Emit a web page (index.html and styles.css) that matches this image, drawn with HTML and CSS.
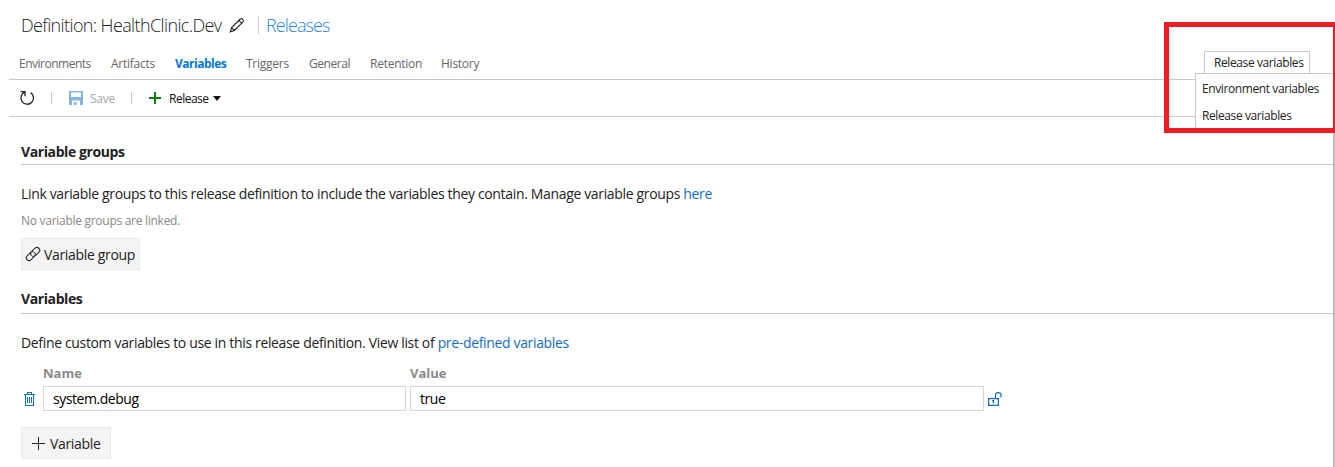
FILE: index.html
```html
<!DOCTYPE html>
<html lang="en">
<head>
<meta charset="utf-8">
<title>Definition: HealthClinic.Dev</title>
<link rel="stylesheet" href="styles.css">
</head>
<body>
<div class="page">
  <header class="title">
    <span class="title-name">Definition: HealthClinic.Dev</span>
    <svg class="pencil" width="16" height="16" viewBox="0 0 16 16" fill="none" stroke="#222" stroke-width="1.1"><path d="M1.2 14.8 2.6 10.6 11.2 2Q12.4.9 13.7 2.2T14 4.8L5.4 13.4ZM9.8 3.4 12.6 6.2M2.6 10.6 5.4 13.4"/></svg>
    <span class="title-rule"></span>
    <a class="title-link">Releases</a>
  </header>
  <nav class="tabs">
    <a class="t-env">Environments</a><a class="t-art">Artifacts</a><a class="t-var active">Variables</a><a class="t-tri">Triggers</a><a class="t-gen">General</a><a class="t-ret">Retention</a><a class="t-his">History</a>
  </nav>
  <div class="toolbar">
    <svg class="refresh" width="16" height="16" viewBox="0 0 16 16" fill="none" stroke="#222" stroke-width="1.3"><path d="M1.5 1.7H6V6.2M5.6 2.2A6.3 6.3 0 1 0 11.6 2.6"/></svg>
    <span class="sep"></span>
    <svg class="disk" width="14" height="14" viewBox="0 0 14 14"><path fill="#87b4df" fill-rule="evenodd" d="M0 0H14V14H11V9.5H3V14H0ZM2 1.5V6H12V1.5ZM5 11H7.5V14H5Z"/></svg>
    <span class="save">Save</span>
    <span class="sep sep-two"></span>
    <svg class="plus" width="12" height="12" viewBox="0 0 12 12"><path stroke="#107c10" stroke-width="2" d="M6 0V12M0 6H12"/></svg>
    <span class="release">Release</span>
    <svg class="caret" width="8" height="5" viewBox="0 0 8 5"><path fill="#111" d="M0 0H8L4 5Z"/></svg>
  </div>
  <main class="content">
    <h2 class="h-groups"><span>Variable groups</span></h2>
    <p class="desc desc-groups"><span>Link variable groups to this release definition to include the variables they contain. Manage variable groups <a>here</a></span></p>
    <p class="note"><span>No variable groups are linked.</span></p>
    <button class="btn btn-group">
      <svg width="16" height="16" viewBox="0 0 16 16" fill="none" stroke="#333" stroke-width="1.15"><path d="M6.6 9.6Q4.6 7.6 6.6 5.6L9.8 2.4Q11.8.4 13.8 2.2T13.9 6.2L10.7 9.4Q9 10.9 7.4 9.9M9.4 6.4Q11.4 8.4 9.4 10.4L6.2 13.6Q4.2 15.6 2.2 13.8T2.1 9.8L5.3 6.6Q7 5.1 8.6 6.1"/></svg>
      <span>Variable group</span>
    </button>
    <h2 class="h-vars"><span>Variables</span></h2>
    <p class="desc desc-vars"><span>Define custom variables to use in this release definition. View list of <a>pre-defined variables</a></span></p>
    <div class="grid">
      <span></span><b class="h-name">Name</b><b class="h-value">Value</b><span></span>
      <svg class="trash" width="11" height="14" viewBox="0 0 11 14" fill="none" stroke="#106ebe" shape-rendering="crispEdges"><path d="M0 2.5H11M3.5 2V.5H7.5V2M1.5 3V13.5H9.5V3M3.5 5V11M5.5 5V11M7.5 5V11"/></svg>
      <div class="field"><span class="f-name">system.debug</span></div>
      <div class="field"><span class="f-value">true</span></div>
      <svg class="lock" width="14" height="14" viewBox="0 0 14 14" fill="none" stroke="#106ebe"><path stroke-width="1.2" d="M.6 6.6H10.4V13.4H.6Z"/><path stroke-width="1.2" d="M7.5 6V2.8Q7.5.6 10.2.6T13 2.8V5.5"/><path stroke-width="1.3" d="M4 8.6H6.2M5.5 8.5V11.5"/></svg>
    </div>
    <button class="btn btn-var">
      <svg width="13" height="13" viewBox="0 0 13 13"><path stroke="#222" d="M6.5 0V13M0 6.5H13"/></svg>
      <span>Variable</span>
    </button>
  </main>
</div>
<div class="scroll-edge"></div>
<div class="picker">
  <div class="picker-current"><span>Release variables</span></div>
  <div class="picker-menu"><span class="m-env">Environment variables</span><span class="m-rel">Release variables</span></div>
</div>
<div class="callout"></div>
</body>
</html>
```
FILE: styles.css
```css
* { box-sizing: border-box; }
body { margin: 0; width: 1335px; height: 467px; overflow: hidden; position: relative; background: #fff; color: #222; font-family: "Open Sans", "Noto Sans", sans-serif; font-size: 13px; }
a { color: #106ebe; }
.page { width: 1333px; padding-left: 9px; white-space: nowrap; }
.title { display: flex; align-items: center; height: 50px; padding-left: 12px; font-size: 18px; font-weight: 300; }
.title-name { width: 208px; letter-spacing: -0.62px; }
.title-rule { width: 1px; height: 18px; margin: 0 7px 0 13px; background: #c8d2e0; }
.title-link { color: #2b88d8; letter-spacing: -0.9px; }
.tabs { display: flex; align-items: center; height: 30px; padding: 0 0 3px 10px; border-bottom: 1px solid #c8c8c8; font-size: 12px; letter-spacing: -0.25px; }
.tabs a { color: #666; }
.tabs .active { color: #0078d7; font-weight: 700; letter-spacing: -0.5px; }
.tabs .t-env { width: 92px; letter-spacing: -0.5px; }
.t-art { width: 64px; }
.t-var { width: 71px; }
.t-tri { width: 63px; }
.t-gen { width: 61px; }
.tabs .t-gen { letter-spacing: -0.45px; }
.t-ret { width: 71px; }
.toolbar { display: flex; align-items: center; height: 37px; padding-left: 10px; border-bottom: 1px solid #c8c8c8; font-size: 12px; }
.sep { width: 1px; height: 12px; margin: 0 17px 0 16px; background: #c8c8c8; }
.save { width: 25px; margin-left: 7px; color: #a6a6a6; letter-spacing: -0.25px; }
.plus { margin: 0 8px 0 0; }
.release { width: 40px; color: #111; letter-spacing: -0.5px; }
.caret { margin-left: 4px; }
.content { padding-left: 12px; font-size: 14px; letter-spacing: -0.343px; }
h2 { display: flex; align-items: center; margin: 0; border-bottom: 1px solid #c8c8c8; font-size: 14px; font-weight: 700; letter-spacing: -0.4px; }
.h-groups { height: 48px; padding-top: 21px; }
p { margin: 0; display: flex; align-items: center; }
.desc { height: 57px; }
.note { height: 16px; margin-top: -10px; font-size: 12px; letter-spacing: -0.28px; color: #888; }
.btn { display: flex; align-items: center; height: 32px; padding: 0 0 0 4px; border: 1px solid #eaeaea; background: #f4f4f4; font: inherit; letter-spacing: -0.33px; color: #222; }
.btn-group { width: 119px; margin-top: 10px; padding-left: 3px; }
.btn-group span { margin-left: 3px; padding-top: 1px; }
.h-vars { height: 44px; padding-top: 14px; }
.desc-vars { padding-bottom: 1px; }
.grid { display: grid; grid-template-columns: 18px 363px 574px 14px; grid-template-rows: 15px 25px; column-gap: 4px; row-gap: 7px; align-items: center; margin-top: -7px; }
.grid b { padding-top: 2px; color: #8a8a8a; font-size: 13px; letter-spacing: 0; }
.trash { margin-left: 3px; }
.field { display: flex; align-items: center; height: 25px; padding: 0 0 0 9px; border: 1px solid #d6d6d6; color: #000; letter-spacing: -0.45px; }
.btn-var { width: 90px; margin-top: 16px; padding-left: 10px; }
.btn-var span { margin-left: 5px; }
.scroll-edge { position: absolute; left: 1333px; top: 133px; width: 2px; height: 334px; background: #bcbcbc; }
.picker { position: absolute; left: 1195px; top: 51px; width: 138px; font-size: 12px; letter-spacing: -0.4px; white-space: nowrap; }
.picker-current { display: flex; align-items: center; width: 106px; height: 22px; margin-left: 9px; padding-left: 9px; border: 1px solid #c8c8c8; border-bottom: 0; background: #fff; }
.picker-menu { display: flex; flex-direction: column; height: 57px; padding: 2px 0 0 6px; border: solid #c8c8c8; border-width: 1px 0 0 1px; background: #fff; }
.picker-menu span { height: 27px; line-height: 26px; }
.callout { position: absolute; left: 1164px; top: 22px; width: 171px; height: 111px; border: 5px solid #ee1c25; border-right-width: 2px; }
```
